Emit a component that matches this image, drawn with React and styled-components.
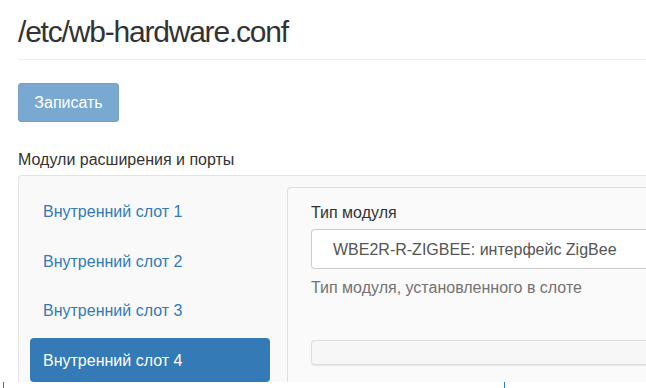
import styled, { createGlobalStyle } from 'styled-components';

const GlobalStyle = createGlobalStyle`
  html, body {
    margin: 0;
    padding: 0;
    background: #fff;
    overflow: hidden;
  }
  body {
    font-family: "Liberation Sans", Arial, sans-serif;
    color: #333;
  }
`;

const Page = styled.div`
  width: 646px;
  height: 388px;
  display: flex;
  flex-direction: column;
  overflow: hidden;
`;

const Viewport = styled.div`
  height: 382px;
  overflow: hidden;
  padding-left: 18px;
  box-sizing: border-box;
`;

const Title = styled.h1`
  margin: 14px 0 0;
  font-size: 30px;
  line-height: 36px;
  font-weight: 400;
  letter-spacing: -1.2px;
  color: #333;
  padding-bottom: 9px;
  border-bottom: 1px solid #eee;
`;

const SaveButton = styled.button`
  margin-top: 23px;
  width: 101px;
  height: 39px;
  border: 1px solid #2e6da4;
  border-radius: 3px;
  background: #337ab7;
  opacity: 0.65;
  color: #fff;
  font-family: inherit;
  font-size: 16px;
  cursor: not-allowed;
`;

const SectionLabel = styled.div`
  margin-top: 28px;
  font-size: 16px;
  line-height: 20px;
  color: #333;
`;

const Well = styled.div`
  margin-top: 5px;
  display: flex;
  align-items: flex-start;
  gap: 17px;
  padding: 13px 0 0 11px;
  border: 1px solid #e3e3e3;
  border-right: none;
  border-radius: 4px 0 0 0;
  background: #f9f9f9;
  height: 260px;
`;

const Nav = styled.ul`
  list-style: none;
  margin: 0;
  padding: 0;
  width: 240px;
  flex: none;
  display: flex;
  flex-direction: column;
  gap: 5.5px;
`;

const NavItem = styled.li`
  height: 44px;
  display: flex;
  align-items: center;
  padding: 2px 0 0 13px;
  box-sizing: border-box;
  border-radius: 4px;
  font-size: 16px;
  background: ${p => (p.$active ? '#337ab7' : 'transparent')};
  color: ${p => (p.$active ? '#fff' : '#337ab7')};
`;

const Panel = styled.div`
  flex: 1;
  margin-top: -2px;
  padding: 14px 0 0 23px;
  border: 1px solid #ddd;
  border-right: none;
  border-radius: 4px 0 0 0;
  background: #fafafa;
  height: 240px;
`;

const FieldLabel = styled.div`
  font-size: 16px;
  line-height: 22px;
  color: #333;
`;

const Select = styled.div`
  margin-top: 5px;
  height: 40px;
  display: flex;
  align-items: center;
  padding: 2px 0 0 21px;
  box-sizing: border-box;
  background: #fff;
  border: 1px solid #ccc;
  border-right: none;
  border-radius: 4px 0 0 4px;
  font-size: 16px;
  color: #555;
  white-space: nowrap;
`;

const HelpText = styled.div`
  margin-top: 8px;
  font-size: 16px;
  line-height: 22px;
  color: #737373;
`;

const EmptyInput = styled.div`
  margin-top: 41px;
  height: 25px;
  box-sizing: border-box;
  border: 1px solid #ddd;
  border-right: none;
  border-radius: 4px 0 0 4px;
  background: #f7f7f7;
  box-shadow: 0 1px 1px rgba(0, 0, 0, 0.08);
`;

const Strip = styled.div`
  height: 6px;
  background: #fff;
  display: flex;
`;

const Tick = styled.span`
  width: 1px;
  height: 6px;
  background: #2f7bc0;
  margin-left: ${p => p.$offset}px;
`;

const slots = ['Внутренний слот 1', 'Внутренний слот 2', 'Внутренний слот 3', 'Внутренний слот 4'];

export default function App() {
  return (
    <Page>
      <GlobalStyle />
      <Viewport>
        <Title>/etc/wb-hardware.conf</Title>
        <SaveButton disabled>Записать</SaveButton>
        <SectionLabel>Модули расширения и порты</SectionLabel>
        <Well>
          <Nav>
            {slots.map((s, i) => (
              <NavItem key={s} $active={i === 3}>{s}</NavItem>
            ))}
          </Nav>
          <Panel>
            <FieldLabel>Тип модуля</FieldLabel>
            <Select>WBE2R-R-ZIGBEE: интерфейс ZigBee</Select>
            <HelpText>Тип модуля, установленного в слоте</HelpText>
            <EmptyInput />
          </Panel>
        </Well>
      </Viewport>
      <Strip>
        <Tick $offset={3} />
        <Tick $offset={500} />
      </Strip>
    </Page>
  );
}
